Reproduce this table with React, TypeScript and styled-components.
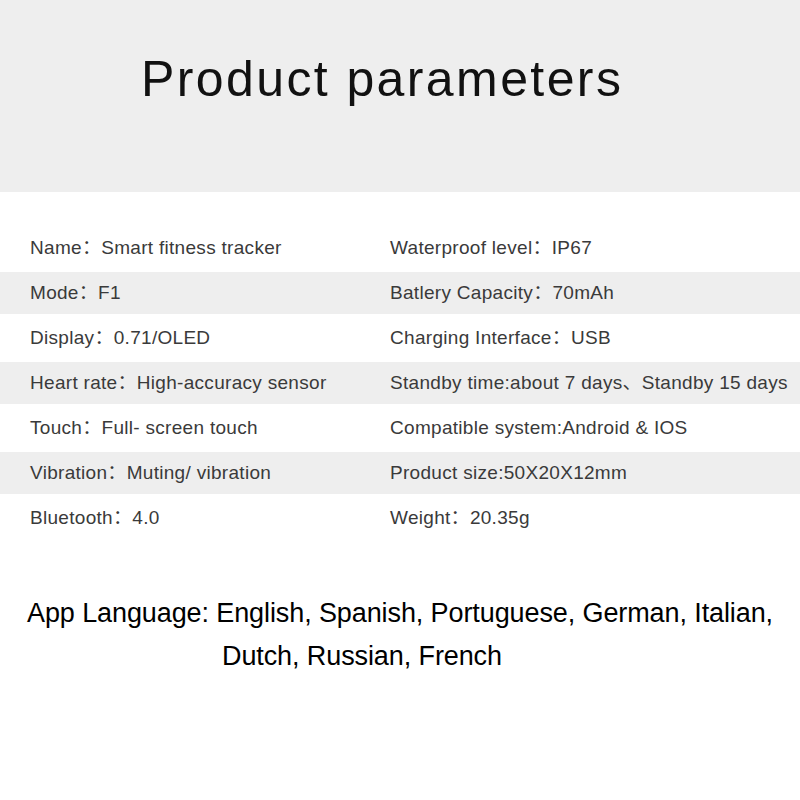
import styled, { createGlobalStyle } from 'styled-components';

const GlobalStyle = createGlobalStyle`
  body {
    margin: 0;
    background: #ffffff;
  }
`;

const Page = styled.div`
  width: 800px;
  height: 800px;
  background: #ffffff;
  overflow: hidden;
  font-family: 'Liberation Sans', Arial, 'Noto Sans CJK SC', sans-serif;
`;

const Header = styled.header`
  height: 192px;
  background: #eeeeee;
  padding: 54px 0 0 141px;
  box-sizing: border-box;
`;

const Title = styled.h1`
  margin: 0;
  font-size: 50px;
  line-height: 50px;
  font-weight: 400;
  letter-spacing: 2.4px;
  color: #111111;
`;

const Specs = styled.section`
  margin-top: 32px;
  display: flex;
  flex-direction: column;
`;

const Row = styled.div<{ $shade?: boolean }>`
  display: grid;
  grid-template-columns: 360px 1fr;
  align-items: center;
  height: ${(p) => (p.$shade ? '42px' : '48px')};
  padding-left: 30px;
  background: ${(p) => (p.$shade ? '#eeeeee' : '#ffffff')};
`;

const Cell = styled.span`
  display: block;
  font-size: 19px;
  line-height: 22px;
  height: 22px;
  letter-spacing: 0.3px;
  color: #3a3a3a;
  white-space: nowrap;
`;

const Languages = styled.div`
  margin-top: 50px;
  font-size: 27px;
  line-height: 43px;
  letter-spacing: -0.1px;
  color: #000000;
`;

const LangLine = styled.div<{ $indent?: number }>`
  white-space: nowrap;
  text-align: ${(p) => (p.$indent ? 'left' : 'center')};
  padding-left: ${(p) => (p.$indent ? `${p.$indent}px` : '0')};
`;

const specs: [string, string][] = [
  ['Name：Smart fitness tracker', 'Waterproof level：IP67'],
  ['Mode：F1', 'Batlery Capacity：70mAh'],
  ['Display：0.71/OLED', 'Charging Interface：USB'],
  ['Heart rate：High-accuracy sensor', 'Standby time:about 7 days、Standby 15 days'],
  ['Touch：Full- screen touch', 'Compatible system:Android & IOS'],
  ['Vibration：Muting/ vibration', 'Product size:50X20X12mm'],
  ['Bluetooth：4.0', 'Weight：20.35g'],
];

export default function App() {
  return (
    <Page>
      <GlobalStyle />
      <Header>
        <Title>Product parameters</Title>
      </Header>
      <Specs>
        {specs.map(([left, right], i) => (
          <Row key={i} $shade={i % 2 === 1}>
            <Cell>{left}</Cell>
            <Cell>{right}</Cell>
          </Row>
        ))}
      </Specs>
      <Languages>
        <LangLine>App Language: English, Spanish, Portuguese, German, Italian,</LangLine>
        <LangLine $indent={222}>Dutch, Russian, French</LangLine>
      </Languages>
    </Page>
  );
}
